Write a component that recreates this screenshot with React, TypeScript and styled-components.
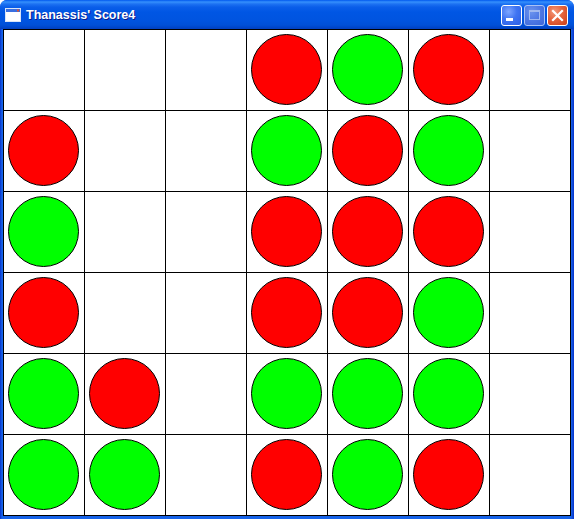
import React from "react";
import styled, { createGlobalStyle } from "styled-components";

const Global = createGlobalStyle`
  html, body { margin: 0; padding: 0; background: #ffffff; }
  #root { width: 574px; height: 519px; }
`;

const Window = styled.div`
  width: 574px;
  height: 519px;
  display: flex;
  flex-direction: column;
  border-radius: 7px 7px 0 0;
  overflow: hidden;
  background: #0842d6;
`;

const TitleBar = styled.div`
  height: 29px;
  flex: none;
  display: flex;
  align-items: center;
  padding: 0 5px 0 5px;
  box-sizing: border-box;
  background: linear-gradient(
    to bottom,
    #0058ee 0px,
    #3590fc 2px,
    #1d72f2 4px,
    #0a5ee9 7px,
    #0056e4 12px,
    #0054e0 20px,
    #0050d8 25px,
    #003fc0 29px
  );
`;

const TitleText = styled.span`
  font-family: "Liberation Sans", Arial, sans-serif;
  font-weight: bold;
  font-size: 12.5px;
  color: #ffffff;
  text-shadow: 1px 1px 0 #0a1c8c;
  margin-left: 5px;
  margin-top: 1px;
  flex: 1;
`;

const Buttons = styled.div`
  display: flex;
  gap: 2px;
  margin-top: 2px;
  margin-right: 1px;
`;

const WinButton = styled.div<{ $kind: "min" | "max" | "close" }>`
  width: 21px;
  height: 21px;
  box-sizing: border-box;
  border-radius: 3px;
  border: 1px solid ${(p) => (p.$kind === "max" ? "#a8c2f6" : "#ffffff")};
  display: flex;
  align-items: center;
  justify-content: center;
  background: ${(p) =>
    p.$kind === "close"
      ? "radial-gradient(circle at 35% 30%, #f39a7c 0%, #e5643d 45%, #cc3e16 100%)"
      : p.$kind === "max"
      ? "radial-gradient(circle at 35% 30%, #6b94ee 0%, #4d78e4 50%, #3c66d8 100%)"
      : "radial-gradient(circle at 35% 30%, #7ea6ff 0%, #3f74f2 45%, #2b5ee6 100%)"};
`;

const Body = styled.div`
  flex: 1;
  display: flex;
  padding: 0 3px 3px 3px;
  background: linear-gradient(to right, #0831c8 0px, #1663ea 2px, #1663ea 571px, #0831c8 574px);
`;

const Board = styled.div`
  display: grid;
  grid-template-columns: repeat(7, 80px);
  grid-template-rows: repeat(6, 80px);
  gap: 1px;
  padding: 1px;
  background: #000000;
`;

const Cell = styled.div`
  background: #ffffff;
  padding: 4px;
  box-sizing: border-box;
`;

const Disc = styled.div<{ $color: "R" | "G" }>`
  width: 71px;
  height: 71px;
  box-sizing: border-box;
  border-radius: 50%;
  border: 1px solid #000000;
  background: ${(p) => (p.$color === "R" ? "#ff0000" : "#00ff00")};
`;

const board: string[] = [
  "___RGR_",
  "R__GRG_",
  "G__RRR_",
  "R__RRG_",
  "GR_GGG_",
  "GG_RGR_",
];

const AppIcon = () => (
  <svg width="16" height="14" viewBox="0 0 16 14">
    <rect x="0.5" y="0.5" width="15" height="13" fill="#ffffff" stroke="#d8e4f8" />
    <rect x="1" y="1" width="14" height="3" fill="#3a6fe0" />
    <rect x="12" y="1.5" width="2" height="2" fill="#e05030" />
  </svg>
);

export default function App() {
  return (
    <>
      <Global />
      <Window>
        <TitleBar>
          <AppIcon />
          <TitleText>Thanassis' Score4</TitleText>
          <Buttons>
            <WinButton $kind="min">
              <svg width="19" height="19" viewBox="0 0 19 19">
                <rect x="4" y="12" width="7" height="3" fill="#ffffff" />
              </svg>
            </WinButton>
            <WinButton $kind="max">
              <svg width="19" height="19" viewBox="0 0 19 19">
                <rect x="4.5" y="4.5" width="10" height="9" fill="none" stroke="#9fb9f0" />
                <rect x="4" y="4" width="11" height="2" fill="#9fb9f0" />
              </svg>
            </WinButton>
            <WinButton $kind="close">
              <svg width="19" height="19" viewBox="0 0 19 19">
                <path d="M5 5 L14 14 M14 5 L5 14" stroke="#ffffff" strokeWidth="2.2" strokeLinecap="square" />
              </svg>
            </WinButton>
          </Buttons>
        </TitleBar>
        <Body>
          <Board>
            {board.flatMap((row, r) =>
              row.split("").map((c, i) => (
                <Cell key={`${r}-${i}`}>
                  {c !== "_" && <Disc $color={c as "R" | "G"} />}
                </Cell>
              ))
            )}
          </Board>
        </Body>
      </Window>
    </>
  );
}
